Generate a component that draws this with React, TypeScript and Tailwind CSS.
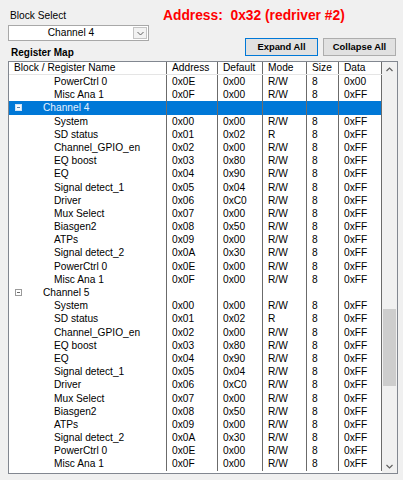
import React from "react";

type Row = { name: string; kind: "child" | "group" | "sel"; addr?: string; def?: string; mode?: string; size?: string; data?: string };

const children: [string, string, string, string][] = [
  ["System", "0x00", "0x00", "R/W"],
  ["SD status", "0x01", "0x02", "R"],
  ["Channel_GPIO_en", "0x02", "0x00", "R/W"],
  ["EQ boost", "0x03", "0x80", "R/W"],
  ["EQ", "0x04", "0x90", "R/W"],
  ["Signal detect_1", "0x05", "0x04", "R/W"],
  ["Driver", "0x06", "0xC0", "R/W"],
  ["Mux Select", "0x07", "0x00", "R/W"],
  ["Biasgen2", "0x08", "0x50", "R/W"],
  ["ATPs", "0x09", "0x00", "R/W"],
  ["Signal detect_2", "0x0A", "0x30", "R/W"],
  ["PowerCtrl 0", "0x0E", "0x00", "R/W"],
  ["Misc Ana 1", "0x0F", "0x00", "R/W"],
];

const rows: Row[] = [
  { name: "PowerCtrl 0", kind: "child", addr: "0x0E", def: "0x00", mode: "R/W", size: "8", data: "0x00" },
  { name: "Misc Ana 1", kind: "child", addr: "0x0F", def: "0x00", mode: "R/W", size: "8", data: "0xFF" },
  { name: "Channel 4", kind: "sel" },
  ...children.map((c) => ({ name: c[0], kind: "child" as const, addr: c[1], def: c[2], mode: c[3], size: "8", data: "0xFF" })),
  { name: "Channel 5", kind: "group" },
  ...children.map((c) => ({ name: c[0], kind: "child" as const, addr: c[1], def: c[2], mode: c[3], size: "8", data: "0xFF" })),
];

const cell = "shrink-0 h-full border-r border-[#6b6b6b] pl-[5px] whitespace-nowrap overflow-hidden";

function MinusBox({ sel }: { sel: boolean }) {
  return (
    <div
      className={
        "w-[7px] h-[7px] border flex items-center justify-center " +
        (sel ? "border-[#cfe3f7] bg-[#f4f8fc]" : "border-[#9a9a9a] bg-white")
      }
    >
      <div className={"w-[3px] h-[1px] " + (sel ? "bg-[#5a7fa8]" : "bg-[#6a6a6a]")} />
    </div>
  );
}

function TableRow({ r }: { r: Row }) {
  const sel = r.kind === "sel";
  return (
    <div className={"flex h-[13.2px] leading-[13.2px] " + (sel ? "bg-[#0078d7] text-[#e6f2ff]" : "bg-white text-black")}>
      <div className={cell + " w-[158px] flex items-center"}>
        {r.kind === "child" ? (
          <span className="pl-[40px]">{r.name}</span>
        ) : (
          <>
            <div className="ml-[1px]">
              <MinusBox sel={sel} />
            </div>
            <span className="pl-[21px]">{r.name}</span>
          </>
        )}
      </div>
      <div className={cell + " w-[51px]"}>{r.addr}</div>
      <div className={cell + " w-[45px]"}>{r.def}</div>
      <div className={cell + " w-[44px]"}>{r.mode}</div>
      <div className={cell + " w-[32px]"}>{r.size}</div>
      <div className={cell + " w-[43px]"}>{r.data}</div>
    </div>
  );
}

export default function App() {
  return (
    <div className="w-[403px] h-[480px] bg-[#f0f0f0] overflow-hidden text-black font-['Liberation_Sans',Arial,sans-serif]">
      <div className="flex h-[61px]">
        <div className="pl-[8px] w-[155px] shrink-0 flex flex-col">
          <div className="mt-[9px] h-[13px] leading-[13px] pl-[2px] text-[10.2px]">Block Select</div>
          <div className="mt-[3px] w-[141px] h-[16px] bg-white border border-[#a8a8a8] flex items-center">
            <div className="flex-1 text-center text-[10.2px] leading-[14px]">Channel 4</div>
            <div className="w-[14px] h-[12px] mr-[1px] border border-[#c4c4c4] bg-[#f2f2f2] flex items-center justify-center">
              <svg width="7" height="5" viewBox="0 0 7 5">
                <path d="M0.5 1 L3.5 4 L6.5 1" fill="none" stroke="#606060" strokeWidth="1" />
              </svg>
            </div>
          </div>
          <div className="mt-[5px] h-[13px] leading-[13px] pl-[3px] text-[10px] font-bold">Register Map</div>
        </div>
        <div className="flex flex-col">
          <div className="ml-[8px] mt-[7px] h-[17px] leading-[17px] text-[13.8px] font-bold text-[#ff0000] whitespace-pre">
            {"Address:  0x32 (redriver #2)"}
          </div>
          <div className="mt-[14px] ml-[90px] flex gap-[5px]">
            <div className="w-[73px] h-[18px] bg-[#e1e1e1] border border-[#0078d7] flex items-center justify-center text-[9.4px] font-bold">
              Expand All
            </div>
            <div className="w-[73px] h-[18px] bg-[#e1e1e1] border border-[#adadad] flex items-center justify-center text-[9.4px] font-bold">
              Collapse All
            </div>
          </div>
        </div>
      </div>
      <div className="ml-[8px] w-[390px] h-[413px] border border-[#828790] bg-white flex text-[10.2px]">
        <div className="w-[373px] flex flex-col overflow-hidden">
          <div className="flex h-[13px] leading-[12px] border-b border-[#e5e5e5] bg-white shrink-0">
            <div className={cell + " w-[158px]"}>Block / Register Name</div>
            <div className={cell + " w-[51px]"}>Address</div>
            <div className={cell + " w-[45px]"}>Default</div>
            <div className={cell + " w-[44px]"}>Mode</div>
            <div className={cell + " w-[32px]"}>Size</div>
            <div className={cell + " w-[43px]"}>Data</div>
          </div>
          <div className="flex-1 overflow-hidden">
            {rows.map((r, i) => (
              <TableRow key={i} r={r} />
            ))}
          </div>
        </div>
        <div className="w-[15px] bg-[#f0f0f0] flex flex-col">
          <div className="h-[14px] flex items-center justify-center">
            <svg width="7" height="5" viewBox="0 0 7 5">
              <path d="M0.5 4 L3.5 1 L6.5 4" fill="none" stroke="#606060" strokeWidth="1.2" />
            </svg>
          </div>
          <div className="h-[233px]" />
          <div className="mx-[1px] h-[77px] bg-[#cdcdcd]" />
          <div className="flex-1" />
          <div className="h-[14px] flex items-center justify-center">
            <svg width="7" height="5" viewBox="0 0 7 5">
              <path d="M0.5 1 L3.5 4 L6.5 1" fill="none" stroke="#606060" strokeWidth="1.2" />
            </svg>
          </div>
        </div>
      </div>
    </div>
  );
}
